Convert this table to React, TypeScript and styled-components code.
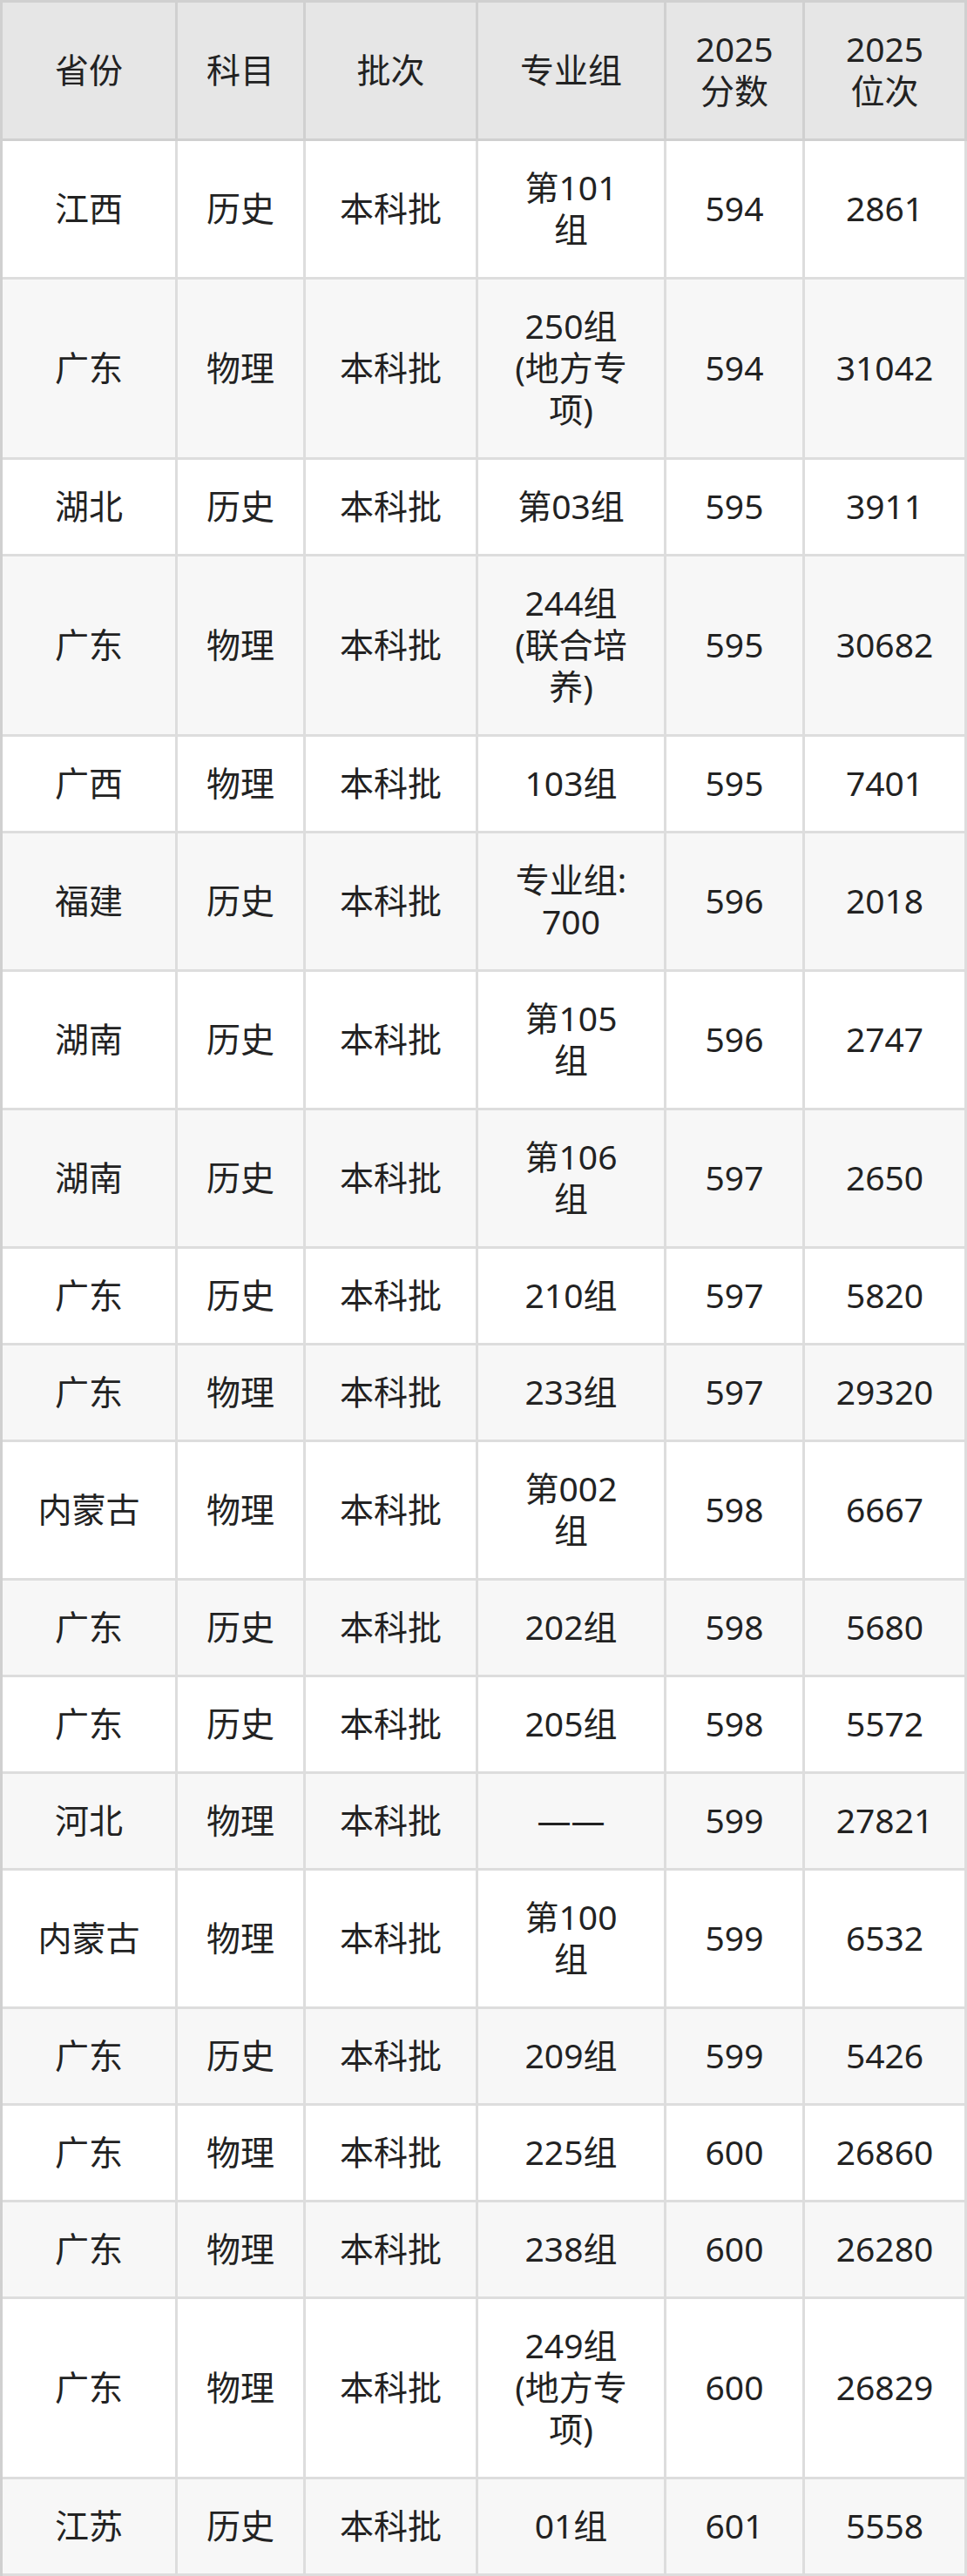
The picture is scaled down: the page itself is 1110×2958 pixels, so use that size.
import React from 'react';
import styled, { createGlobalStyle } from 'styled-components';

const GlobalStyle = createGlobalStyle`
  html, body {
    margin: 0;
    padding: 0;
    background: #ffffff;
  }
`;

const Table = styled.table`
  width: 1110px;
  table-layout: fixed;
  border-collapse: separate;
  border-spacing: 0;
  border-top: 3px solid #d0d0d0;
  border-left: 3px solid #d0d0d0;
  font-family: 'Noto Sans', 'Noto Sans CJK SC', sans-serif;
  font-size: 39px;
  line-height: 48px;
  color: #222222;
`;

const HeadCell = styled.th<{ $w: number }>`
  box-sizing: border-box;
  width: ${(p) => p.$w}px;
  padding: 29px 4px 31px;
  background: #e6e6e6;
  border-right: 3px solid #d0d0d0;
  border-bottom: 3px solid #d0d0d0;
  font-weight: 400;
  text-align: center;
  vertical-align: middle;
  white-space: pre-line;
`;

const Row = styled.tr<{ $even: boolean }>`
  background: ${(p) => (p.$even ? '#f7f7f7' : '#ffffff')};
`;

const Cell = styled.td`
  box-sizing: border-box;
  padding: 29px 4px 31px;
  border-right: 3px solid #dddddd;
  border-bottom: 3px solid #dddddd;
  text-align: center;
  vertical-align: middle;
  white-space: pre-line;
`;

const columns = [
  { label: '省份', w: 201 },
  { label: '科目', w: 147 },
  { label: '批次', w: 198 },
  { label: '专业组', w: 216 },
  { label: '2025\n分数', w: 159 },
  { label: '2025\n位次', w: 186 },
];

const rows: string[][] = [
  ['江西', '历史', '本科批', '第101\n组', '594', '2861'],
  ['广东', '物理', '本科批', '250组\n(地方专\n项)', '594', '31042'],
  ['湖北', '历史', '本科批', '第03组', '595', '3911'],
  ['广东', '物理', '本科批', '244组\n(联合培\n养)', '595', '30682'],
  ['广西', '物理', '本科批', '103组', '595', '7401'],
  ['福建', '历史', '本科批', '专业组:\n700', '596', '2018'],
  ['湖南', '历史', '本科批', '第105\n组', '596', '2747'],
  ['湖南', '历史', '本科批', '第106\n组', '597', '2650'],
  ['广东', '历史', '本科批', '210组', '597', '5820'],
  ['广东', '物理', '本科批', '233组', '597', '29320'],
  ['内蒙古', '物理', '本科批', '第002\n组', '598', '6667'],
  ['广东', '历史', '本科批', '202组', '598', '5680'],
  ['广东', '历史', '本科批', '205组', '598', '5572'],
  ['河北', '物理', '本科批', '——', '599', '27821'],
  ['内蒙古', '物理', '本科批', '第100\n组', '599', '6532'],
  ['广东', '历史', '本科批', '209组', '599', '5426'],
  ['广东', '物理', '本科批', '225组', '600', '26860'],
  ['广东', '物理', '本科批', '238组', '600', '26280'],
  ['广东', '物理', '本科批', '249组\n(地方专\n项)', '600', '26829'],
  ['江苏', '历史', '本科批', '01组', '601', '5558'],
];

export default function App() {
  return (
    <>
      <GlobalStyle />
      <Table>
        <thead>
          <tr>
            {columns.map((c) => (
              <HeadCell key={c.label} $w={c.w}>
                {c.label}
              </HeadCell>
            ))}
          </tr>
        </thead>
        <tbody>
          {rows.map((r, i) => (
            <Row key={i} $even={i % 2 === 1}>
              {r.map((v, j) => (
                <Cell key={j}>{v}</Cell>
              ))}
            </Row>
          ))}
        </tbody>
      </Table>
    </>
  );
}
